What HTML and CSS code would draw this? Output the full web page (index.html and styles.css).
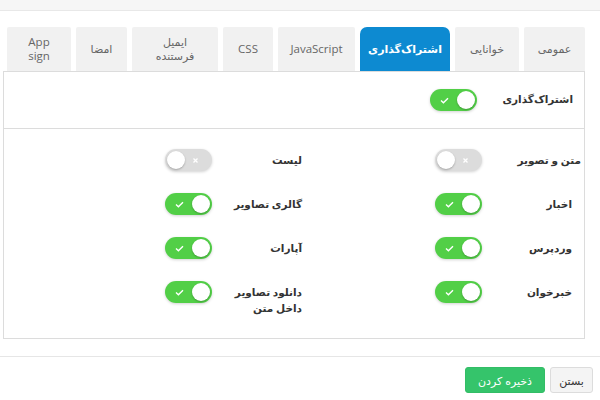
FILE: index.html
```html
<!DOCTYPE html>
<html lang="fa" dir="rtl">
<head>
<meta charset="utf-8">
<title>تنظیمات</title>
<link rel="stylesheet" href="styles.css">
</head>
<body>
<div class="topbar"></div>
<main class="main">
  <nav class="tabs">
    <div class="tab tab-general">عمومی</div>
    <div class="tab tab-read">خوانایی</div>
    <div class="tab tab-share is-active">اشتراک‌گذاری</div>
    <div class="tab tab-js latin">JavaScript</div>
    <div class="tab tab-css latin">CSS</div>
    <div class="tab tab-mail">ایمیل<br>فرستنده</div>
    <div class="tab tab-sign">امضا</div>
    <div class="tab tab-app latin">App<br>sign</div>
  </nav>
  <section class="panel">
    <div class="panel-head">
      <div class="row">
        <span class="label label-head">اشتراک‌گذاری</span>
        <span class="switch is-on"><svg class="ico" width="9" height="7" viewBox="0 0 9 7"><path d="M1 3.6 L3.4 5.8 L8 1.2" fill="none" stroke="#fff" stroke-width="1.4"/></svg><span class="knob"></span></span>
      </div>
    </div>
    <div class="panel-body">
      <div class="row">
        <span class="label label-wide">متن و تصویر</span>
        <span class="switch"><span class="knob"></span><svg class="ico" width="7" height="7" viewBox="0 0 7 7"><path d="M1.5 1.5 L5.5 5.5 M5.5 1.5 L1.5 5.5" stroke="#fff" stroke-width="1.3"/></svg></span>
      </div>
      <div class="row">
        <span class="label">لیست</span>
        <span class="switch"><span class="knob"></span><svg class="ico" width="7" height="7" viewBox="0 0 7 7"><path d="M1.5 1.5 L5.5 5.5 M5.5 1.5 L1.5 5.5" stroke="#fff" stroke-width="1.3"/></svg></span>
      </div>
      <div class="row">
        <span class="label">اخبار</span>
        <span class="switch is-on"><svg class="ico" width="9" height="7" viewBox="0 0 9 7"><path d="M1 3.6 L3.4 5.8 L8 1.2" fill="none" stroke="#fff" stroke-width="1.4"/></svg><span class="knob"></span></span>
      </div>
      <div class="row">
        <span class="label">گالری تصاویر</span>
        <span class="switch is-on"><svg class="ico" width="9" height="7" viewBox="0 0 9 7"><path d="M1 3.6 L3.4 5.8 L8 1.2" fill="none" stroke="#fff" stroke-width="1.4"/></svg><span class="knob"></span></span>
      </div>
      <div class="row">
        <span class="label">وردپرس</span>
        <span class="switch is-on"><svg class="ico" width="9" height="7" viewBox="0 0 9 7"><path d="M1 3.6 L3.4 5.8 L8 1.2" fill="none" stroke="#fff" stroke-width="1.4"/></svg><span class="knob"></span></span>
      </div>
      <div class="row">
        <span class="label">آپارات</span>
        <span class="switch is-on"><svg class="ico" width="9" height="7" viewBox="0 0 9 7"><path d="M1 3.6 L3.4 5.8 L8 1.2" fill="none" stroke="#fff" stroke-width="1.4"/></svg><span class="knob"></span></span>
      </div>
      <div class="row">
        <span class="label">خبرخوان</span>
        <span class="switch is-on"><svg class="ico" width="9" height="7" viewBox="0 0 9 7"><path d="M1 3.6 L3.4 5.8 L8 1.2" fill="none" stroke="#fff" stroke-width="1.4"/></svg><span class="knob"></span></span>
      </div>
      <div class="row">
        <span class="label label-wrap">دانلود تصاویر داخل متن</span>
        <span class="switch is-on"><svg class="ico" width="9" height="7" viewBox="0 0 9 7"><path d="M1 3.6 L3.4 5.8 L8 1.2" fill="none" stroke="#fff" stroke-width="1.4"/></svg><span class="knob"></span></span>
      </div>
    </div>
  </section>
</main>
<footer class="footer">
  <button class="btn btn-close">بستن</button>
  <button class="btn btn-save">ذخیره کردن</button>
</footer>
</body>
</html>
```
FILE: styles.css
```css
* { box-sizing: border-box; }
html, body { margin: 0; padding: 0; background: #fff; }
body {
  direction: rtl;
  font-family: "Open Sans", "DejaVu Sans", sans-serif;
  font-size: 11px;
  color: #333;
  width: 600px;
  height: 400px;
  overflow: hidden;
}
.topbar {
  height: 11px;
  background: #f6f6f6;
  border-bottom: 1px solid #e8e8e8;
}
.main {
  padding: 16px 15px 0 15px;
}
.tabs {
  display: flex;
  gap: 5px;
  height: 44px;
  margin-left: -12px;
}
.tab {
  display: flex;
  align-items: center;
  justify-content: center;
  text-align: center;
  background: #f1f1f1;
  color: #666;
  font-size: 11px;
  line-height: 14px;
  border-radius: 2px 2px 0 0;
}
.tab.latin { font-size: 11.5px; }
.tab-general { width: 61px; }
.tab-read { width: 64px; }
.tab-share { width: 90px; }
.tab-js { width: 77px; }
.tab-css { width: 50px; }
.tab-mail { width: 86px; }
.tab-sign { width: 51px; }
.tab-app { width: 64px; }
.tab.is-active {
  background: #0d8ad1;
  color: #fff;
  font-weight: bold;
  border-radius: 7px 7px 0 0;
}
.panel {
  border: 1px solid #dcdcdc;
  margin-left: -12px;
}
.panel-head {
  height: 57px;
  border-bottom: 1px solid #dcdcdc;
  display: flex;
  align-items: center;
  padding: 0 11px 0 0;
}
.panel-body {
  display: grid;
  grid-template-columns: 270px 270px;
  justify-content: start;
  row-gap: 22px;
  padding: 20px 12px 22px 0;
}
.row {
  display: flex;
  align-items: flex-start;
  min-height: 22px;
}
.label {
  width: 68px;
  margin-left: 22px;
  font-weight: bold;
  font-size: 10.5px;
  line-height: 16px;
  padding-top: 3px;
  color: #333;
  white-space: nowrap;
}
.label-wrap {
  white-space: normal;
}
.label-head {
  width: 76px;
  margin-left: 20px;
  padding-top: 2px;
}
.label-wide {
  width: 77px;
  margin-right: -9px;
}
.switch {
  direction: ltr;
  width: 47px;
  height: 22px;
  border-radius: 11px;
  background: #dcdcdc;
  display: flex;
  align-items: center;
  justify-content: space-between;
  padding: 0 2px;
  box-shadow: 0 1px 3px rgba(0, 0, 0, 0.18);
  flex: none;
}
.switch.is-on {
  background: #52cf47;
  padding-left: 10px;
}
.switch .ico { flex: none; }
.switch:not(.is-on) .ico { margin-right: 11px; }
.knob {
  width: 18px;
  height: 18px;
  border-radius: 50%;
  background: #fff;
  box-shadow: 0 1px 2px rgba(0, 0, 0, 0.25);
}
.footer {
  margin-top: 17px;
  border-top: 1px solid #e6e6e6;
  display: flex;
  gap: 5px;
  padding: 10px 7px 0 0;
}
.btn {
  font-family: "Open Sans", "DejaVu Sans", sans-serif;
  font-size: 11px;
  height: 26px;
  border-radius: 3px;
  padding: 0;
  cursor: pointer;
}
.btn-close {
  width: 43px;
  background: #f4f4f4;
  border: 1px solid #dcdcdc;
  color: #333;
}
.btn-save {
  width: 80px;
  background: #35c46b;
  border: 1px solid #33bd66;
  color: #fff;
}
```
